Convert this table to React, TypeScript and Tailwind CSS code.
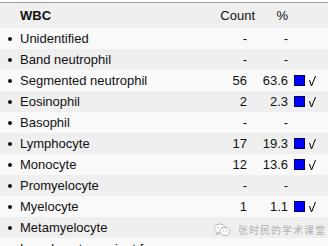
import React from "react";

type Row = { name: string; count: string; pct: string; flag: boolean };

const rows: Row[] = [
  { name: "Unidentified", count: "-", pct: "-", flag: false },
  { name: "Band neutrophil", count: "-", pct: "-", flag: false },
  { name: "Segmented neutrophil", count: "56", pct: "63.6", flag: true },
  { name: "Eosinophil", count: "2", pct: "2.3", flag: true },
  { name: "Basophil", count: "-", pct: "-", flag: false },
  { name: "Lymphocyte", count: "17", pct: "19.3", flag: true },
  { name: "Monocyte", count: "12", pct: "13.6", flag: true },
  { name: "Promyelocyte", count: "-", pct: "-", flag: false },
  { name: "Myelocyte", count: "1", pct: "1.1", flag: true },
  { name: "Metamyelocyte", count: "", pct: "", flag: false },
  { name: "Lymphocyte, variant form", count: "", pct: "", flag: false },
];

function Check() {
  return (
    <svg width="8" height="12" viewBox="0 0 8 12" className="ml-[4px]">
      <polyline points="0.5,5 2.5,11 6.5,1" fill="none" stroke="#000" strokeWidth="1" />
    </svg>
  );
}

function WeChat() {
  return (
    <svg width="17" height="14" viewBox="0 0 17 14">
      <ellipse cx="6" cy="5.5" rx="5.5" ry="4.5" fill="#fff" stroke="#b5b5b5" strokeWidth="1" />
      <path d="M3 9.5 L2 12 L5.5 10" fill="#fff" stroke="#b5b5b5" strokeWidth="1" />
      <ellipse cx="11" cy="8.5" rx="5" ry="4" fill="#fff" stroke="#b5b5b5" strokeWidth="1" />
      <circle cx="4" cy="4.5" r="0.8" fill="#b5b5b5" />
      <circle cx="8" cy="4.5" r="0.8" fill="#b5b5b5" />
      <circle cx="9.5" cy="8" r="0.7" fill="#b5b5b5" />
      <circle cx="12.5" cy="8" r="0.7" fill="#b5b5b5" />
    </svg>
  );
}

export default function App() {
  return (
    <div
      className="relative w-[328px] h-[246px] overflow-hidden bg-white text-[13px] text-[#111]"
      style={{ fontFamily: '"Liberation Sans", Arial, sans-serif' }}
    >
      <div className="h-[2px] bg-white" />
      <div className="h-[1px] bg-[#a0a0a0]" />
      <div className="flex items-center h-[25px] bg-[#efefef]">
        <div className="w-[20px]" />
        <div className="w-[195px] font-bold">WBC</div>
        <div className="w-[40px] text-right">Count</div>
        <div className="w-[33px] text-right">%</div>
      </div>
      {rows.map((r, i) => (
        <div
          key={r.name}
          className={`flex items-center h-[21px] ${i % 2 === 0 ? "bg-[#f9f9f9]" : "bg-[#efefef]"}`}
        >
          <div className="w-[20px] flex pl-[8px]">
            <span className="w-[4px] h-[4px] rounded-full bg-[#111]" />
          </div>
          <div className="w-[187px] whitespace-nowrap">{r.name}</div>
          <div className="w-[40px] text-right">{r.count}</div>
          <div className="w-[41px] text-right">{r.pct}</div>
          {r.flag && (
            <div className="flex items-center ml-[6px]">
              <span className="w-[11px] h-[11px] bg-[#0000ff] border border-[#000060]" />
              <Check />
            </div>
          )}
        </div>
      ))}
      <div className="absolute left-[214px] top-[222px] flex items-center gap-[7px]">
        <WeChat />
        <span
          className="text-[10px] text-[#b0b0b0] tracking-[1px]"
          style={{ fontFamily: '"Noto Sans CJK SC", sans-serif' }}
        >
          张时民的学术课堂
        </span>
      </div>
    </div>
  );
}
